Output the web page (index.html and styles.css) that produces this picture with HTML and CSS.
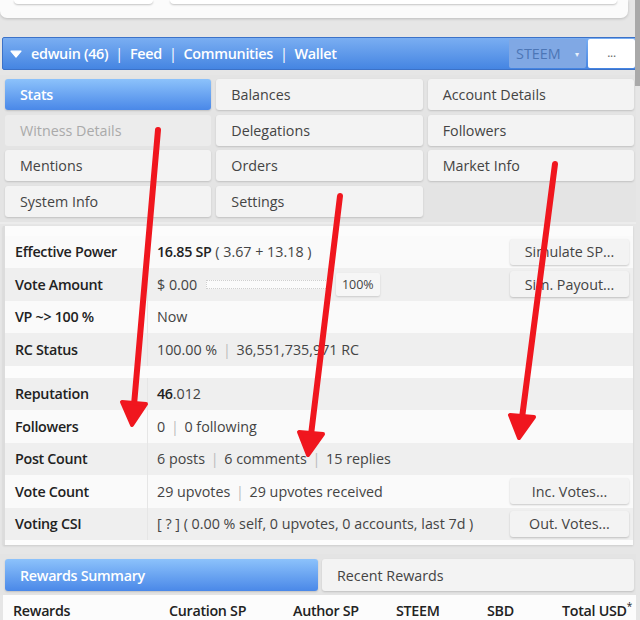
FILE: index.html
```html
<!DOCTYPE html>
<html lang="en">
<head>
<meta charset="utf-8">
<title>SteemWorld - edwuin</title>
<link rel="stylesheet" href="styles.css">
</head>
<body>
<div class="page">
  <div class="topcard">
    <div class="stub stub-a"></div>
    <div class="stub stub-b"></div>
  </div>

  <div class="header">
    <svg class="tri" width="12" height="8" viewBox="0 0 12 8"><path d="M1 1.2 L11 1.2 L6 7 Z" fill="#fff" stroke="#fff" stroke-width="1.2" stroke-linejoin="round"/></svg>
    <span class="nav">edwuin (46)</span><span class="pipe">|</span><span class="nav">Feed</span><span class="pipe">|</span><span class="nav">Communities</span><span class="pipe">|</span><span class="nav">Wallet</span>
    <div class="spacer"></div>
    <div class="select">STEEM <span class="caret">▾</span></div>
    <div class="more">...</div>
  </div>

  <div class="menu">
    <div class="mbtn active">Stats</div>
    <div class="mbtn">Balances</div>
    <div class="mbtn">Account Details</div>
    <div class="mbtn disabled">Witness Details</div>
    <div class="mbtn">Delegations</div>
    <div class="mbtn">Followers</div>
    <div class="mbtn">Mentions</div>
    <div class="mbtn">Orders</div>
    <div class="mbtn">Market Info</div>
    <div class="mbtn">System Info</div>
    <div class="mbtn">Settings</div>
  </div>

  <div class="card">
    <div class="group">
      <div class="row light">
        <div class="label">Effective Power</div>
        <div class="value"><b>16.85 SP</b> ( 3.67 + 13.18 )</div>
        <div class="btn">Simulate SP...</div>
      </div>
      <div class="row dark">
        <div class="label">Vote Amount</div>
        <div class="value">$ 0.00 <span class="bar"></span><span class="pct">100%</span></div>
        <div class="btn">Sim. Payout...</div>
      </div>
      <div class="row light">
        <div class="label">VP ~&gt; 100 %</div>
        <div class="value">Now</div>
      </div>
      <div class="row dark">
        <div class="label">RC Status</div>
        <div class="value">100.00 % <span class="sep">|</span> 36,551,735,971 RC</div>
      </div>
    </div>
    <div class="group second">
      <div class="row dark">
        <div class="label">Reputation</div>
        <div class="value"><b>46</b>.012</div>
      </div>
      <div class="row light">
        <div class="label">Followers</div>
        <div class="value">0 <span class="sep">|</span> 0 following</div>
      </div>
      <div class="row dark">
        <div class="label">Post Count</div>
        <div class="value">6 posts <span class="sep">|</span> 6 comments <span class="sep">|</span> 15 replies</div>
      </div>
      <div class="row light">
        <div class="label">Vote Count</div>
        <div class="value">29 upvotes <span class="sep">|</span> 29 upvotes received</div>
        <div class="btn">Inc. Votes...</div>
      </div>
      <div class="row dark">
        <div class="label">Voting CSI</div>
        <div class="value">[ ? ] ( 0.00 % self, 0 upvotes, 0 accounts, last 7d )</div>
        <div class="btn">Out. Votes...</div>
      </div>
    </div>
  </div>

  <div class="tabs">
    <div class="mbtn active">Rewards Summary</div>
    <div class="mbtn">Recent Rewards</div>
  </div>

  <div class="rtable">
    <div class="rhead">
      <div>Rewards</div>
      <div>Curation SP</div>
      <div>Author SP</div>
      <div>STEEM</div>
      <div>SBD</div>
      <div class="last">Total USD<sup>*</sup></div>
    </div>
  </div>
</div>

<div class="scrollthumb"></div>

<svg class="arrows" width="640" height="620" viewBox="0 0 640 620">
  <g stroke="#f0161e" stroke-width="6" stroke-linecap="round" fill="#f0161e" stroke-linejoin="round">
    <line x1="158" y1="130" x2="134" y2="405"/>
    <polygon points="132,425 122,402 146,404" stroke-width="4"/>
    <line x1="340" y1="196" x2="311" y2="435"/>
    <polygon points="308,455 299,432 323,434" stroke-width="4"/>
    <line x1="555" y1="164" x2="522" y2="418"/>
    <polygon points="519,438 510,415 534,417" stroke-width="4"/>
  </g>
</svg>
</body>
</html>
```

FILE: styles.css
```css
html, body {
  margin: 0;
  padding: 0;
  width: 640px;
  height: 620px;
  overflow: hidden;
}

body {
  position: relative;
  background: #e6e6e6;
  font-family: "Open Sans", "Noto Sans", sans-serif;
  font-size: 14.3px;
  color: #444;
}

.page {
  width: 636px;
}

/* top card (cut off) */
.topcard {
  width: 628px;
  height: 18px;
  background: #fbfbfb;
  border-radius: 0 0 7px 7px;
  box-shadow: 0 1px 3px rgba(0, 0, 0, 0.18);
  display: flex;
  padding: 0 11px 0 14px;
  box-sizing: border-box;
}

.stub {
  height: 4px;
  background: #fff;
  border-radius: 0 0 4px 4px;
  box-shadow: 0 1px 2px rgba(0, 0, 0, 0.22);
}

.stub-a { width: 139px; }
.stub-b { flex: 1; margin-left: 17px; }

/* header bar */
.header {
  margin: 19px 0 0 2px;
  width: 635px;
  height: 33px;
  box-sizing: border-box;
  border: 1px solid #3c72c8;
  border-radius: 2px;
  background: linear-gradient(#7aaef2, #4585e2);
  display: flex;
  align-items: center;
  color: #fff;
  font-weight: 600;
  letter-spacing: -0.3px;
  font-size: 14.4px;
}

.tri { margin: 0 9px 0 7px; }

.pipe {
  margin: 0 7px 0 7px;
  font-weight: 400;
}

.spacer { flex: 1; }

.select {
  align-self: stretch;
  width: 77px;
  margin: 1px 0;
  box-sizing: border-box;
  padding-left: 7px;
  display: flex;
  align-items: center;
  background: #80a8e4;
  color: #4c76b6;
  font-weight: 400;
  letter-spacing: 0;
  border-radius: 2px;
}

.caret {
  font-size: 8px;
  color: #e8f0fb;
  margin-left: 14px;
}

.more {
  align-self: stretch;
  width: 47px;
  margin: 1px 1px 1px 2px;
  background: #fff;
  border-radius: 2px;
  color: #666;
  font-weight: 400;
  font-size: 12px;
  display: flex;
  align-items: center;
  justify-content: center;
  padding-bottom: 3px;
  box-sizing: border-box;
}

/* menu */
.menu {
  margin-top: 5px;
  background: #e4e4e4;
  padding: 4px 2px 5px 5px;
  display: grid;
  grid-template-columns: repeat(3, 1fr);
  grid-auto-rows: 31px;
  column-gap: 5px;
  row-gap: 4.5px;
  border-bottom: 2px solid #ececec;
}

.mbtn {
  background: #f3f3f3;
  border-radius: 3px;
  box-shadow: 0 1px 2px rgba(0, 0, 0, 0.16);
  display: flex;
  align-items: center;
  padding-left: 15px;
  color: #444;
}

.mbtn.active {
  background: linear-gradient(#8cc2fb, #4a88e8);
  color: #fff;
  font-weight: 600;
  letter-spacing: -0.3px;
}

.mbtn.disabled {
  background: #ececec;
  color: #aaa;
  box-shadow: none;
}

/* stats card */
.card {
  margin: 2px 0 0 3px;
  width: 628px;
  background: #fcfcfc;
  border-left: 2px solid #dcdcdc;
  padding: 10px 0 5px 0;
  box-shadow: 0 1px 2px rgba(0, 0, 0, 0.12);
}

.group.second { margin-top: 12px; }

.row {
  display: grid;
  grid-template-columns: 142px 1fr auto;
  align-items: center;
  height: 32.5px;
}

.row.light { background: #fafafa; }
.row.dark { background: #efefef; }

.label {
  padding-left: 10px;
  color: #222;
  font-weight: 600;
  letter-spacing: -0.3px;
}

.value {
  align-self: stretch;
  display: flex;
  align-items: center;
  padding-left: 9px;
  border-left: 1px solid #e6e6e6;
  white-space: pre;
  color: #444;
}

.value b {
  color: #222;
  font-weight: 600;
  letter-spacing: -0.3px;
}

.sep {
  color: #bbb;
  margin: 0 2px;
}

.bar {
  display: inline-block;
  width: 120px;
  height: 7px;
  margin-left: 5px;
  border: 1px dotted #cfcfcf;
  background: #fbfbfb;
}

.pct {
  margin-left: 8px;
  height: 23px;
  padding: 0 6px;
  display: inline-flex;
  align-items: center;
  background: #f6f6f6;
  border-radius: 2px;
  box-shadow: 0 1px 2px rgba(0, 0, 0, 0.15);
  font-size: 12.5px;
}

.btn {
  width: 119px;
  height: 26px;
  margin-right: 4px;
  display: flex;
  align-items: center;
  justify-content: center;
  background: #f3f3f3;
  border-radius: 3px;
  box-shadow: 0 1px 2px rgba(0, 0, 0, 0.2);
  color: #444;
}

/* rewards tabs */
.tabs {
  margin-top: 9px;
  background: #e4e4e4;
  padding: 5px 2px 4px 5px;
  display: grid;
  grid-template-columns: 313px 1fr;
  grid-auto-rows: 32px;
  column-gap: 4px;
}

.tabs .mbtn { padding-left: 15px; }

.rtable {
  background: #fcfcfc;
  margin-left: 3px;
  height: 40px;
}

.rhead {
  display: grid;
  grid-template-columns: 156px 124px 103px 91px 70px 1fr;
  padding-top: 6px;
  color: #222;
  font-weight: 600;
  letter-spacing: -0.3px;
}

.rhead > div { padding-left: 10px; }

.rhead .last {
  text-align: right;
  padding: 0 4px 0 0;
  white-space: nowrap;
}

.rhead sup {
  font-size: 10px;
  font-weight: 400;
  vertical-align: top;
  line-height: 1;
}

/* overlay scrollbar thumb */
.scrollthumb {
  position: absolute;
  top: 0;
  right: 0;
  width: 5px;
  height: 86px;
  background: #a9a9a9;
}

/* red annotation arrows */
.arrows {
  position: absolute;
  top: 0;
  left: 0;
  pointer-events: none;
}
```
